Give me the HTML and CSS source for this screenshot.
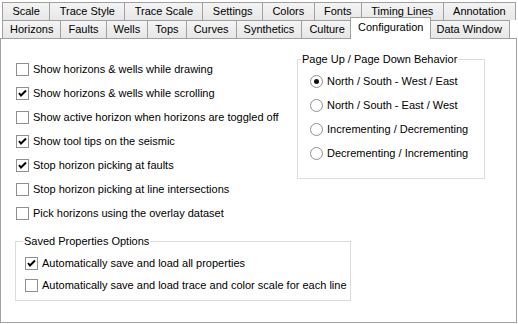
FILE: index.html
```html
<!DOCTYPE html>
<html lang="en">
<head>
    <meta charset="UTF-8">
    <title>Display Properties</title>
    <link rel="stylesheet" href="styles.css">
</head>
<body>
    <div class="tabs">
        <div class="tab-row row-back">
            <div class="tab">Scale</div>
            <div class="tab">Trace Style</div>
            <div class="tab">Trace Scale</div>
            <div class="tab">Settings</div>
            <div class="tab">Colors</div>
            <div class="tab">Fonts</div>
            <div class="tab">Timing Lines</div>
            <div class="tab">Annotation</div>
        </div>
        <div class="tab-row row-front">
            <div class="tab">Horizons</div>
            <div class="tab">Faults</div>
            <div class="tab">Wells</div>
            <div class="tab">Tops</div>
            <div class="tab">Curves</div>
            <div class="tab">Synthetics</div>
            <div class="tab">Culture</div>
            <div class="tab selected">Configuration</div>
            <div class="tab">Data Window</div>
        </div>
    </div>

    <div class="panel">
        <div class="top">
            <div class="options">
                <div class="check"><span class="box"></span>Show horizons &amp; wells while drawing</div>
                <div class="check"><span class="box on"><svg viewBox="0 0 11 11"><path d="M2 5 L4 7.5 L9 2.5"/></svg></span>Show horizons &amp; wells while scrolling</div>
                <div class="check"><span class="box"></span>Show active horizon when horizons are toggled off</div>
                <div class="check"><span class="box on"><svg viewBox="0 0 11 11"><path d="M2 5 L4 7.5 L9 2.5"/></svg></span>Show tool tips on the seismic</div>
                <div class="check"><span class="box on"><svg viewBox="0 0 11 11"><path d="M2 5 L4 7.5 L9 2.5"/></svg></span>Stop horizon picking at faults</div>
                <div class="check"><span class="box"></span>Stop horizon picking at line intersections</div>
                <div class="check"><span class="box"></span>Pick horizons using the overlay dataset</div>
            </div>

            <fieldset class="group paging">
                <legend>Page Up / Page Down Behavior</legend>
                <div class="radio"><span class="dot on"></span>North / South - West / East</div>
                <div class="radio"><span class="dot"></span>North / South - East / West</div>
                <div class="radio"><span class="dot"></span>Incrementing / Decrementing</div>
                <div class="radio"><span class="dot"></span>Decrementing / Incrementing</div>
            </fieldset>
        </div>

        <fieldset class="group saved">
            <legend>Saved Properties Options</legend>
            <div class="check"><span class="box on"><svg viewBox="0 0 11 11"><path d="M2 5 L4 7.5 L9 2.5"/></svg></span>Automatically save and load all properties</div>
            <div class="check"><span class="box"></span>Automatically save and load trace and color scale for each line</div>
        </fieldset>
    </div>
</body>
</html>
```

FILE: styles.css
```css
* {
    box-sizing: border-box;
}

body {
    margin: 0;
    background: #fff;
    color: #000;
    font-family: "Liberation Sans", Arial, sans-serif;
    font-size: 11px;
}

.tabs {
    height: 38px;
    padding-top: 2px;
}

.tab-row {
    display: flex;
    height: 18px;
    margin-left: 2px;
}

.row-back {
    width: 514px;
}

.row-front {
    width: 508px;
}

.tab {
    flex: 1 1 auto;
    height: 18px;
    border: 1px solid #a0a0a0;
    border-bottom: none;
    border-right: none;
    background: linear-gradient(#f4f4f4, #e7e7e7);
    text-align: center;
    line-height: 17px;
    white-space: nowrap;
}

.tab:last-child {
    border-right: 1px solid #a0a0a0;
}

.tab.selected {
    position: relative;
    z-index: 1;
    height: 22px;
    margin: -3px -2px 0 -2px;
    border-right: 1px solid #a0a0a0;
    background: #fff;
    line-height: 18px;
}

.tab.selected + .tab {
    border-left: none;
}

.panel {
    width: 517px;
    height: 285px;
    border: 1px solid #a0a0a0;
    padding: 14px 0 0 15px;
}

.top {
    display: flex;
    align-items: flex-start;
}

.options {
    width: 281px;
    margin-top: 4px;
}

.check, .radio {
    display: flex;
    align-items: center;
    height: 24px;
    white-space: nowrap;
}

.box {
    width: 13px;
    height: 13px;
    margin-right: 4px;
    border: 1px solid #8e8f8f;
    background: #fff;
    display: flex;
}

.box svg {
    width: 11px;
    height: 11px;
    fill: none;
    stroke: #000;
    stroke-width: 2;
}

.group {
    margin: 0;
    border: 1px solid #dcdcdc;
}

.group legend {
    padding: 0 1px;
    line-height: 13px;
}

.paging {
    width: 188px;
    padding: 3px 0 13px 12px;
}

.paging legend {
    margin-left: -9px;
}

.dot {
    width: 13px;
    height: 13px;
    margin-right: 4px;
    border: 1px solid #8e8f8f;
    border-radius: 50%;
    background: #fff;
    display: flex;
    align-items: center;
    justify-content: center;
}

.dot.on::after {
    content: "";
    width: 5px;
    height: 5px;
    border-radius: 50%;
    background: #111;
}

.saved {
    width: 336px;
    margin: 10px 0 0 -1px;
    padding: 4px 0 4px 9px;
}

.saved legend {
    margin-left: -2px;
}

.saved .check {
    height: 22px;
}
```
